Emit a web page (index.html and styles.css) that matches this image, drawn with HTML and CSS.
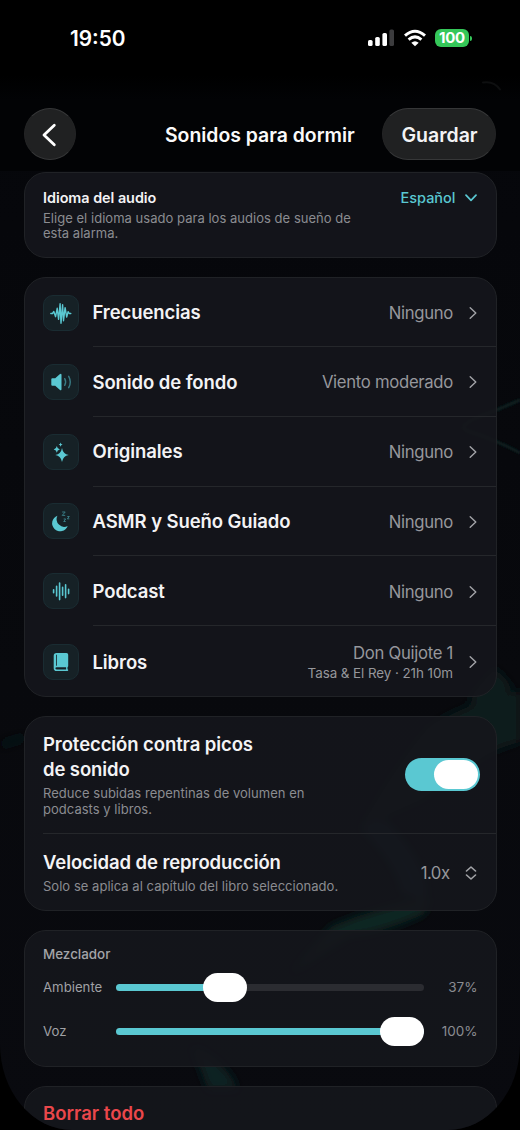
FILE: index.html
```html
<!DOCTYPE html>
<html lang="es">
<head>
<meta charset="utf-8">
<title>Sonidos para dormir</title>
<link rel="stylesheet" href="styles.css">
</head>
<body>
<div class="screen">
  <svg class="backdrop" viewBox="0 0 520 1130" aria-hidden="true">
    <defs><filter id="soft" x="-10%" y="-10%" width="120%" height="120%"><feGaussianBlur stdDeviation="5"/></filter><filter id="thin" x="-20%" y="-20%" width="140%" height="140%"><feGaussianBlur stdDeviation="1.2"/></filter></defs>
    <path d="M520 400Q492 412 478 417Q458 426 467 431Q492 438 520 453" fill="none" stroke="#0b2021" stroke-width="3" filter="url(#thin)"/>
    <g filter="url(#soft)">
      <path d="M468 700L495 668L512 686L492 706Z" fill="#0b1c1c"/>
      <path d="M430 726Q470 702 520 690V742Q490 750 476 762L420 800L362 826Q400 760 430 726Z" fill="#0a1b1d"/>
      <path d="M360 826Q400 868 402 892L426 900Q430 866 384 820Z" fill="#0c2530"/>
      <path d="M332 926Q380 906 430 898L424 914Q380 934 350 936L290 974Z" fill="#0b2624"/>
      <path d="M192 1046Q226 1060 238 1090H208Z" fill="#0b2021"/>
      <path d="M0 742L26 734V740L0 748Z" fill="#0b1518"/>
    </g>
  </svg>

  <header class="top">
    <svg class="glint" viewBox="0 0 20 12" aria-hidden="true"><path d="M1 2.500Q12 .5 18 9.500"/></svg>
    <div class="status">
      <span class="clock">19:50</span>
      <div class="status-icons">
        <svg class="signal" viewBox="0 0 27 18"><rect x="0" y="11" width="4.6" height="6" rx="1.6"/><rect x="7.2" y="8" width="4.6" height="9" rx="1.6"/><rect x="14.4" y="4" width="4.6" height="13" rx="1.6"/><rect class="dim" x="21.4" y="0.5" width="4.6" height="16.5" rx="1.6"/></svg>
        <svg class="wifi" viewBox="0 0 24 18"><path d="M2 6.6Q12-2.2 22 6.6M5.600 10.600Q12 5.200 18.400 10.600" fill="none" stroke="#fff" stroke-width="3"/><path d="M12 17.300L8.300 13.700Q12 10.700 15.700 13.700Z" fill="#fff"/></svg>
        <span class="battery">100</span><i class="battery-tip"></i>
      </div>
    </div>
    <nav class="navbar">
      <button class="glass back" aria-label="Atrás"><svg viewBox="0 0 16 24"><path d="M13.300 2.200L3 12L13.300 21.800"/></svg></button>
      <h1 class="title"><span>Sonidos para dormir</span></h1>
      <button class="glass save"><span>Guardar</span></button>
    </nav>
  </header>

  <main class="content">
    <section class="card language">
      <div>
        <h2 class="small-title"><span>Idioma del audio</span></h2>
        <p class="hint">Elige el idioma usado para los audios de sueño de<br>esta alarma.</p>
      </div>
      <div class="picker"><span>Español</span><svg viewBox="0 0 12 8"><path d="M1 1.2L6 6.3L11 1.2"/></svg></div>
    </section>

    <section class="card list">
      <div class="row">
        <div class="tile"><svg viewBox="0 0 36 36"><path class="wave" d="M7.8 18.5h1.7l1.3-2 1.8 5.2 1.6-8.4 1.4 11 1.5-15.6 .9 19.6 1.6-18.6 .9 16 1.6-13 1.6 9.4 1.4-5.4 1.1 1.8h1.6"/></svg></div>
        <div class="line"><span class="name">Frecuencias</span><span class="value">Ninguno</span><svg class="chev" viewBox="0 0 8 14"><path d="M1.2 1.8L6.8 7L1.2 12.2"/></svg></div>
      </div>
      <div class="row">
        <div class="tile"><svg viewBox="0 0 36 36"><path class="fill" d="M8.300 15.300q0-1 1-1h2.900l4.500-4.100q1.800-1.300 1.800.7v14.200q0 2-1.800.7l-4.500-4.100H9.300q-1 0-1-1z"/><path class="wave faint" d="M21.700 14.700q1.900 3.300 0 6.600M25.700 12.300q3.200 5.700 0 11.400"/></svg></div>
        <div class="line"><span class="name">Sonido de fondo</span><span class="value">Viento moderado</span><svg class="chev" viewBox="0 0 8 14"><path d="M1.2 1.8L6.8 7L1.2 12.2"/></svg></div>
      </div>
      <div class="row">
        <div class="tile"><svg viewBox="0 0 36 36"><path class="fill" d="M19 14q1 6 6.700 7q-5.700 1-6.700 7q-1-6-6.700-7q5.700-1 6.700-7zM13.800 12.100q.4 2.900 3.100 3.300q-2.700.4-3.100 3.300q-.4-2.900-3.100-3.300q2.700-.4 3.100-3.300zM17.600 8.500q.2 1.800 2 2.100q-1.800.3-2 2.100q-.2-1.800-2-2.100q1.800-.3 2-2.100z"/></svg></div>
        <div class="line"><span class="name">Originales</span><span class="value">Ninguno</span><svg class="chev" viewBox="0 0 8 14"><path d="M1.2 1.8L6.8 7L1.2 12.2"/></svg></div>
      </div>
      <div class="row">
        <div class="tile"><svg viewBox="0 0 36 36"><path class="fill" d="M14.400 12.800A8 8 0 1 0 24.700 22.900A7.600 7.600 0 0 1 14.400 12.800Z"/><path class="zed" d="M19.200 9h3l-3 3.400h3M24.300 13.500h2l-2 2.300h2M20.700 16h2l-2 2.500h2"/></svg></div>
        <div class="line"><span class="name">ASMR y Sueño Guiado</span><span class="value">Ninguno</span><svg class="chev" viewBox="0 0 8 14"><path d="M1.2 1.8L6.8 7L1.2 12.2"/></svg></div>
      </div>
      <div class="row">
        <div class="tile"><svg viewBox="0 0 36 36"><path class="bars" d="M10.600 16.700v3M13.600 13.300v9.600M16.600 10v16.600M19.600 14.400v7.800M22.600 11.800v12.800M25.600 16.200v4.400"/></svg></div>
        <div class="line"><span class="name">Podcast</span><span class="value">Ninguno</span><svg class="chev" viewBox="0 0 8 14"><path d="M1.2 1.8L6.8 7L1.2 12.2"/></svg></div>
      </div>
      <div class="row tall">
        <div class="tile"><svg viewBox="0 0 36 36"><path class="fill" fill-rule="evenodd" d="M13.600 9h9.900q1.700 0 1.700 1.700v11.600l-.7 1v2l.7.400v.6q0 .7-.7.700H13.600q-2.900 0-2.900-2.800V11.800Q10.700 9 13.600 9zM13.200 10.800v11h.8v-11zM13.600 23.200q-1.200 0-1.200 1.100t1.200 1.100h9.500v-2.200z"/></svg></div>
        <div class="line"><span class="name">Libros</span><div class="stack"><span class="value">Don Quijote 1</span><span class="sub">Tasa &amp; El Rey · 21h 10m</span></div><svg class="chev" viewBox="0 0 8 14"><path d="M1.2 1.8L6.8 7L1.2 12.2"/></svg></div>
      </div>
    </section>

    <section class="card settings">
      <div class="setting protect">
        <div>
          <h2 class="name">Protección contra picos<br>de sonido</h2>
          <p class="hint">Reduce subidas repentinas de volumen en<br>podcasts y libros.</p>
        </div>
        <div class="switch"><i></i></div>
      </div>
      <div class="setting speed">
        <div>
          <h2 class="name">Velocidad de reproducción</h2>
          <p class="hint">Solo se aplica al capítulo del libro seleccionado.</p>
        </div>
        <div class="stepper"><span>1.0x</span><svg viewBox="0 0 12 14"><path d="M1.500 5L6 1L10.500 5M1.500 9L6 13L10.500 9"/></svg></div>
      </div>
    </section>

    <section class="card mixer">
      <h2 class="mixer-title">Mezclador</h2>
      <div class="slider"><span class="label">Ambiente</span><div class="track"><div class="level" style="width:37%"></div><i class="knob"></i></div><span class="percent">37%</span></div>
      <div class="slider"><span class="label">Voz</span><div class="track"><div class="level" style="width:100%"></div><i class="knob"></i></div><span class="percent">100%</span></div>
    </section>

    <section class="card clear"><span>Borrar todo</span></section>
  </main>
</div>
</body>
</html>
```

FILE: styles.css
```css
* { box-sizing: border-box; }
body { margin: 0; background: #000; font-family: Inter, "Liberation Sans", sans-serif; color: #f3f3f5; }
h1, h2, p { margin: 0; font-weight: inherit; }
button { font: inherit; color: inherit; padding: 0; }
svg { display: block; flex: none; }
span { white-space: nowrap; }

.screen { position: relative; height: 1130px; overflow: hidden; background: linear-gradient(#05060a, #08090d 60%, #090a0f); border-radius: 0 0 72px 72px / 0 0 86px 86px; }
.backdrop { position: absolute; inset: 0; width: 520px; height: 1130px; }
.top { position: relative; height: 171px; background: linear-gradient(#000 0, #000 75px, #020305 100px, #020305); }
.glint { position: absolute; left: 482px; top: 80px; width: 20px; height: 12px; }
.glint path { fill: none; stroke: #0e0f10; stroke-width: 2; stroke-linecap: round; }
.status { display: flex; align-items: center; justify-content: space-between; height: 76px; padding: 0 48px 0 70px; }
.clock { font-size: 20.800px; font-weight: 600; color: #fff; }
.status-icons { display: flex; align-items: center; }
.signal { width: 27px; height: 18px; fill: #fff; }
.signal .dim { fill: #3c3c3e; }
.wifi { width: 24px; height: 18px; margin: 0 8px 0 8px; }
.battery { width: 34px; height: 18px; border-radius: 6px; background: #35c759; color: #fff; font-size: 15px; font-weight: 700; line-height: 18px; text-align: center; letter-spacing: -.2px; }
.battery-tip { width: 2px; height: 5px; margin-left: 1px; border-radius: 0 2px 2px 0; background: #35c759; }

.navbar { display: grid; grid-template-columns: 52px 1fr 114px; align-items: center; margin-top: 32px; padding: 0 24px; }
.glass { height: 52px; border: 1px solid #363738; border-left-color: #242526; border-right-color: #242526; border-radius: 26px; background: #202122; display: flex; align-items: center; justify-content: center; }
.back svg { width: 16px; height: 24px; margin: 2px 3px 0 0; }
.back path { fill: none; stroke: #fff; stroke-width: 2.800; stroke-linecap: round; stroke-linejoin: round; }
.title { padding: 2px 0 0 89px; font-size: 19.400px; font-weight: 600; color: #fafafa; }
.save { padding: 2px 0 0 1px; font-size: 19.500px; font-weight: 600; }

.content { position: relative; display: flex; flex-direction: column; gap: 19px; padding: 1px 23.500px 0 24px; }
.card { border: 1px solid #202226; border-radius: 22px; background: rgba(21, 22, 28, .9); }
.language { height: 86px; padding: 15.500px 19px 0 18px; display: flex; justify-content: space-between; align-items: flex-start; }
.small-title { font-size: 14.400px; line-height: 18px; font-weight: 600; letter-spacing: -.03px; }
.hint { margin-top: 4px; font-size: 13px; line-height: 15.500px; color: #8b8c91; letter-spacing: .03px; }
.picker { display: flex; align-items: center; gap: 9px; font-size: 14.500px; line-height: 18px; font-weight: 500; color: #5ac8d2; }
.picker svg { width: 12px; height: 8px; }
.picker path { fill: none; stroke: #5ac8d2; stroke-width: 1.700; stroke-linecap: round; stroke-linejoin: round; }

.list { height: 420px; padding-left: 18px; }
.row { display: flex; gap: 14px; height: 69.800px; align-items: center; }
.row:first-child { height: 69px; }
.tall { height: 71px; }
.tile { flex: none; width: 36px; height: 36px; margin-left: -.5px; border: 1px solid #1a2c32; border-radius: 10px; background: #162126; }
.tile svg { width: 36px; height: 36px; margin: -1px; }
.fill { fill: #5ac8d2; }
.wave { fill: none; stroke: #5ac8d2; stroke-width: 1.400; stroke-linejoin: round; stroke-linecap: round; }
.faint { stroke: #397b84; }
.bars { fill: none; stroke: #5ac8d2; stroke-width: 1.600; stroke-linecap: round; }
.zed { fill: none; stroke: #397b84; stroke-width: 1; }
.line { flex: 1; height: 100%; display: flex; align-items: center; padding: 1.500px 18.500px 0 0; border-bottom: 1px solid #25272b; }
.tall .line { border: 0; }
.name { font-size: 18.500px; line-height: 25px; font-weight: 600; letter-spacing: -.09px; }
.value { margin-left: auto; font-size: 16.700px; color: #96979c; letter-spacing: -.3px; }
.chev { width: 8px; height: 14px; margin-left: 16px; }
.chev path { fill: none; stroke: #a3a4a8; stroke-width: 1.400; stroke-linecap: round; stroke-linejoin: round; }
.stack { margin-left: auto; display: flex; flex-direction: column; align-items: flex-end; }
.stack .value { line-height: 21px; }
.sub { font-size: 13.400px; line-height: 18px; color: #96979c; letter-spacing: -.06px; }

.settings { height: 195px; padding-left: 18px; }
.setting { display: flex; justify-content: space-between; }
.protect { height: 117px; padding: 15px 16px 0 0; border-bottom: 1px solid #25272b; }
.protect .hint { margin-top: 4px; }
.switch { width: 75px; height: 33px; margin-top: 26px; padding: 2px; border-radius: 17px; background: #5ac8d2; display: flex; justify-content: flex-end; }
.switch i { width: 44px; height: 29px; border-radius: 15px; background: #fff; }
.speed { padding: 16px 19px 0 0; }
.speed .hint { margin-top: 4px; }
.stepper { display: flex; align-items: center; gap: 15px; height: 46px; font-size: 16.700px; letter-spacing: -.5px; color: #96979c; }
.stepper svg { width: 12px; height: 14px; }
.stepper path { fill: none; stroke: #a3a4a8; stroke-width: 1.600; stroke-linecap: round; stroke-linejoin: round; }

.mixer { height: 136.500px; padding: 14px 18px 0; }
.mixer-title { font-size: 13.400px; line-height: 18px; font-weight: 500; color: #a3a4a8; }
.slider { display: flex; align-items: center; height: 44px; font-size: 13.500px; color: #a0a1a5; }
.mixer-title + .slider { margin-top: 2px; }
.label { width: 73px; font-size: 13.200px; }
.track { display: flex; align-items: center; width: 308px; height: 7px; border-radius: 4px; background: #2b2c31; }
.level { height: 7px; border-radius: 4px; background: #5ac8d2; }
.knob { flex: none; width: 44px; height: 29px; margin-left: -27px; border-radius: 15px; background: #fff; }
.slider:last-child .knob { margin-left: -44px; }
.percent { margin-left: auto; color: #8b8c91; }
.clear { height: 80px; padding: 13px 18px; color: #ea474b; font-size: 18.500px; line-height: 27px; font-weight: 600; }
```
